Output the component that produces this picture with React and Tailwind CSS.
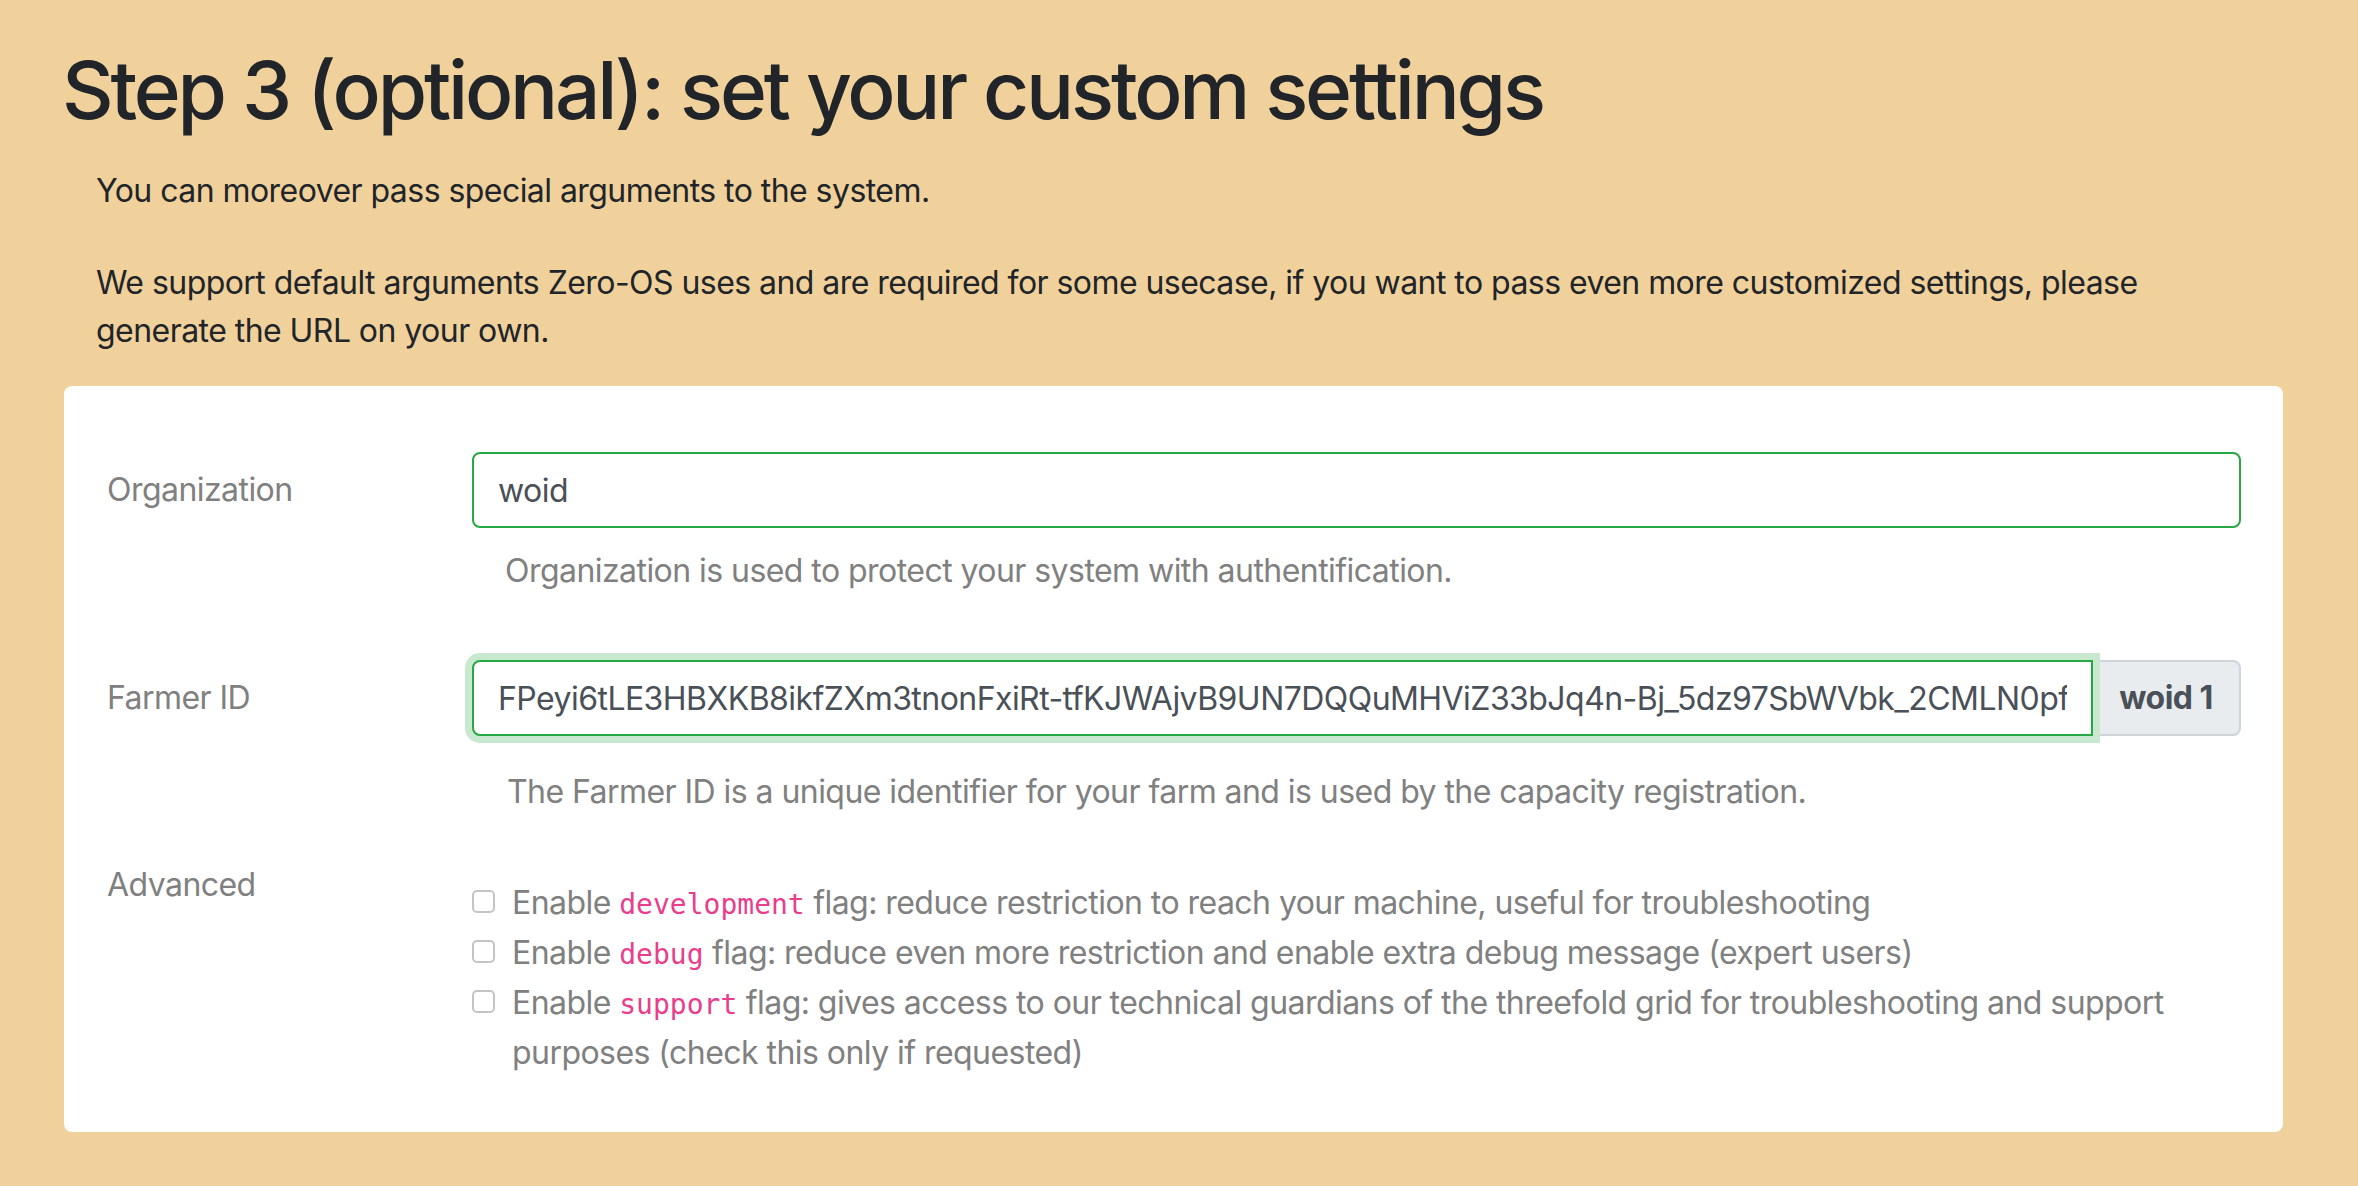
import React from 'react';

const flags = [
  { name: 'development', text: 'flag: reduce restriction to reach your machine, useful for troubleshooting' },
  { name: 'debug', text: 'flag: reduce even more restriction and enable extra debug message (expert users)' },
  {
    name: 'support',
    text: 'flag: gives access to our technical guardians of the threefold grid for troubleshooting and support purposes (check this only if requested)',
  },
];

const farmerId =
  'FPeyi6tLE3HBXKB8ikfZXm3tnonFxiRt-tfKJWAjvB9UN7DQQuMHViZ33bJq4n-Bj_5dz97SbWVbk_2CMLN0pf3kQ8vRt7zYw';

const App = () => {
  return (
    <div className="min-h-[1186px] w-full bg-[#f1d19b] font-['Inter',sans-serif] text-[#212529] tracking-[-0.55px] pl-[64px] pr-[75px] pt-[42px] pb-[40px]">
      <h1 className="text-[80px] leading-[96px] font-medium tracking-[-3.2px] -ml-[2px]">
        Step 3 (optional): set your custom settings
      </h1>

      <div className="px-[32px] text-[32px] leading-[48px] mt-[29px]">
        <p>You can moreover pass special arguments to the system.</p>
        <p className="mt-[44px]">
          We support default arguments Zero-OS uses and are required for some usecase, if you want to pass even more
          customized settings, please generate the URL on your own.
        </p>
      </div>

      <div className="mt-[31px] bg-white rounded-[8px] pl-[40px] pr-[42px] pt-[66px] pb-[55px] text-[32px] leading-[48px]">
        {/* organization */}
        <div className="flex items-center">
          <div className="w-[368px] shrink-0 pl-[3px] text-[#808080]">Organization</div>
          <input
            readOnly
            value="woid"
            className="flex-1 min-w-0 h-[76px] border-2 border-[#28a745] rounded-[8px] px-[24px] text-[32px] leading-[48px] tracking-[-0.55px] text-[#495057] font-['Inter',sans-serif] outline-none bg-white"
          />
        </div>
        <div className="pl-[401px] mt-[19px] text-[#808080]">
          Organization is used to protect your system with authentification.
        </div>

        {/* farmer id */}
        <div className="flex items-center mt-[65px]">
          <div className="w-[368px] shrink-0 pl-[3px] text-[#808080]">Farmer ID</div>
          <div className="flex-1 min-w-0 flex">
            <input
              readOnly
              value={farmerId}
              className="flex-1 min-w-0 h-[76px] border-2 border-[#28a745] rounded-l-[8px] px-[24px] text-[32px] leading-[48px] tracking-[-0.55px] text-[#495057] font-['Inter',sans-serif] outline-none bg-white shadow-[0_0_0_7px_#c8e9cf] relative z-10"
            />
            <div className="w-[148px] shrink-0 h-[76px] flex items-center justify-center bg-[#e9ecef] border-2 border-l-0 border-[#ced4da] rounded-r-[8px] font-bold text-[#495057]">
              woid 1
            </div>
          </div>
        </div>
        <div className="pl-[403px] mt-[32px] text-[#808080]">
          The Farmer ID is a unique identifier for your farm and is used by the capacity registration.
        </div>

        {/* advanced */}
        <div className="flex mt-[45px]">
          <div className="w-[368px] shrink-0 pl-[3px] text-[#808080]">Advanced</div>
          <div className="flex-1 min-w-0 pt-[18px] text-[#808080]">
            {flags.map((f) => (
              <div key={f.name} className="flex items-start">
                <span className="mt-[11px] w-[23px] h-[23px] shrink-0 border-2 border-[#c4c4c4] rounded-[5px] bg-white" />
                <span className="ml-[17px]">
                  Enable{' '}
                  <code className="font-['DejaVu_Sans_Mono',monospace] text-[28px] tracking-normal text-[#e83e8c]">
                    {f.name}
                  </code>{' '}
                  {f.text}
                </span>
              </div>
            ))}
          </div>
        </div>
      </div>
    </div>
  );
};

export default App;
